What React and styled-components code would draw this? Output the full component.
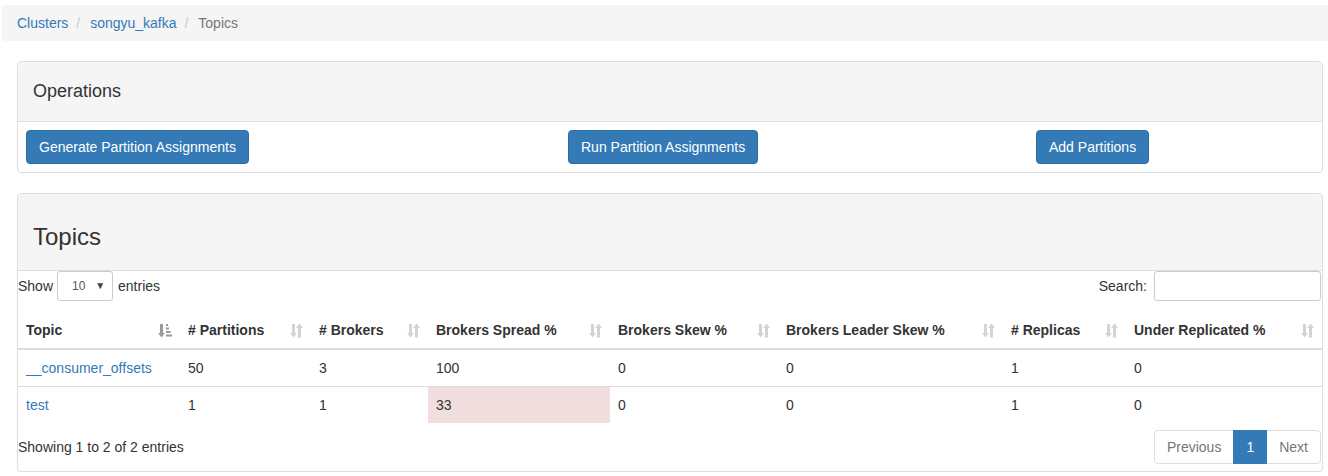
import React from "react";
import styled, { createGlobalStyle } from "styled-components";

const GlobalStyle = createGlobalStyle`
  body {
    margin: 0;
    overflow: hidden;
    background: #fff;
    font-family: "Liberation Sans", Arial, Helvetica, sans-serif;
    font-size: 14px;
    line-height: 20px;
    color: #333;
  }
  * { box-sizing: border-box; }
`;

const Page = styled.div`
  width: 1336px;
  margin-left: 2px;
  padding-top: 5px;
`;

const Breadcrumb = styled.ol`
  display: flex;
  list-style: none;
  margin: 0 0 20px;
  padding: 8px 15px;
  background: #f5f5f5;
  border-radius: 4px;

  li + li::before {
    content: "/\\00a0";
    color: #ccc;
    padding: 0 6px 0 8px;
  }
`;

const Crumb = styled.li`
  color: ${(p) => (p.$active ? "#777" : "#337ab7")};
`;

const Content = styled.div`
  padding: 0 15px;
`;

const Panel = styled.div`
  border: 1px solid #ddd;
  border-radius: 4px;
  margin-bottom: 20px;
  background: #fff;
  overflow: hidden;
`;

const PanelHeading = styled.div`
  background: #f5f5f5;
  border-bottom: 1px solid #ddd;
  padding: ${(p) => (p.$large ? "10px 15px" : "19px 15px 20px")};
`;

const PanelTitle = styled.h3`
  margin: ${(p) => (p.$large ? "20px 0 10px" : "0")};
  font-weight: 500;
  font-size: ${(p) => (p.$large ? "24px" : "18px")};
  line-height: ${(p) => (p.$large ? "26px" : "20px")};
  color: #333;
`;

const OpsBody = styled.div`
  display: grid;
  grid-template-columns: 542px 468px 1fr;
  padding: 8px;
`;

const Button = styled.button`
  justify-self: start;
  font-family: inherit;
  font-size: 14px;
  line-height: 20px;
  padding: 6px 12px;
  color: #fff;
  background: #337ab7;
  border: 1px solid #2e6da4;
  border-radius: 4px;
`;

const Controls = styled.div`
  display: flex;
  justify-content: space-between;
  align-items: center;
  padding: 0 1px 0 0;
`;

const Label = styled.label`
  display: flex;
  align-items: center;
  gap: 4px;
`;

const Select = styled.div`
  display: flex;
  align-items: center;
  justify-content: space-between;
  width: 56px;
  height: 30px;
  padding: 0 7px 0 14px;
  border: 1px solid #ccc;
  border-radius: 3px;
  font-size: 12px;
  color: #555;
  margin-right: 1px;
`;

const Caret = styled.span`
  font-size: 10px;
  color: #444;
`;

const SearchInput = styled.div`
  width: 167px;
  height: 30px;
  margin-left: 3px;
  border: 1px solid #ccc;
  border-radius: 3px;
`;

const Table = styled.table`
  width: 100%;
  table-layout: fixed;
  border-collapse: collapse;
  margin-top: 11px;
`;

const Th = styled.th`
  width: ${(p) => p.$w}px;
  text-align: left;
  padding: 8px;
  border-bottom: 2px solid #ddd;
  font-weight: bold;
`;

const ThInner = styled.div`
  display: flex;
  justify-content: space-between;
  align-items: center;
  white-space: nowrap;
`;

const Td = styled.td`
  padding: 8px;
  border-top: 1px solid #ddd;
  background: ${(p) => (p.$danger ? "#f2dede" : "transparent")};
  tr:first-child > & {
    border-top: none;
  }
`;

const Link = styled.span`
  color: #337ab7;
`;

const Footer = styled.div`
  display: flex;
  justify-content: space-between;
  align-items: center;
  padding: 7px 1px 7px 0;
`;

const Pagination = styled.div`
  display: flex;
`;

const PageItem = styled.span`
  display: block;
  padding: 6px 12px;
  line-height: 20px;
  border: 1px solid ${(p) => (p.$active ? "#337ab7" : "#ddd")};
  margin-left: -1px;
  color: ${(p) => (p.$active ? "#fff" : "#777")};
  background: ${(p) => (p.$active ? "#337ab7" : "#fff")};
  position: relative;
  z-index: ${(p) => (p.$active ? 1 : 0)};
  &:first-child {
    border-radius: 4px 0 0 4px;
    margin-left: 0;
  }
  &:last-child {
    border-radius: 0 4px 4px 0;
  }
`;

const SortBoth = () => (
  <svg width="13" height="15" viewBox="0 0 13 15" fill="#d4d4d4">
    <rect x="2" y="1" width="3" height="10" />
    <polygon points="0,10 7,10 3.5,14.5" />
    <polygon points="6,5 13,5 9.5,0.5" />
    <rect x="8" y="4" width="3" height="10.5" />
  </svg>
);

const SortAsc = () => (
  <svg width="14" height="15" viewBox="0 0 14 15" fill="#9a9a9a">
    <rect x="2" y="1" width="3" height="10" />
    <polygon points="0,10 7,10 3.5,14.5" />
    <rect x="8" y="1" width="2" height="2" />
    <rect x="8" y="4.5" width="3" height="2" />
    <rect x="8" y="8" width="4.5" height="2" />
    <rect x="8" y="11.5" width="6" height="2" />
  </svg>
);

const columns = [
  ["Topic", 162],
  ["# Partitions", 131],
  ["# Brokers", 117],
  ["Brokers Spread %", 182],
  ["Brokers Skew %", 168],
  ["Brokers Leader Skew %", 225],
  ["# Replicas", 123],
  ["Under Replicated %", 196],
];

const rows = [
  { topic: "__consumer_offsets", vals: ["50", "3", "100", "0", "0", "1", "0"] },
  { topic: "test", vals: ["1", "1", "33", "0", "0", "1", "0"], danger: 2 },
];

export default function App() {
  return (
    <Page>
      <GlobalStyle />
      <Breadcrumb>
        <Crumb>Clusters</Crumb>
        <Crumb>songyu_kafka</Crumb>
        <Crumb $active>Topics</Crumb>
      </Breadcrumb>
      <Content>
        <Panel>
          <PanelHeading>
            <PanelTitle>Operations</PanelTitle>
          </PanelHeading>
          <OpsBody>
            <Button>Generate Partition Assignments</Button>
            <Button>Run Partition Assignments</Button>
            <Button>Add Partitions</Button>
          </OpsBody>
        </Panel>
        <Panel>
          <PanelHeading $large>
            <PanelTitle $large>Topics</PanelTitle>
          </PanelHeading>
          <Controls>
            <Label>
              Show
              <Select>
                10<Caret>▼</Caret>
              </Select>
              entries
            </Label>
            <Label>
              Search:
              <SearchInput />
            </Label>
          </Controls>
          <Table>
            <thead>
              <tr>
                {columns.map(([name, w], i) => (
                  <Th key={name} $w={w}>
                    <ThInner>
                      {name}
                      {i === 0 ? <SortAsc /> : <SortBoth />}
                    </ThInner>
                  </Th>
                ))}
              </tr>
            </thead>
            <tbody>
              {rows.map((r) => (
                <tr key={r.topic}>
                  <Td>
                    <Link>{r.topic}</Link>
                  </Td>
                  {r.vals.map((v, i) => (
                    <Td key={i} $danger={r.danger === i}>
                      {v}
                    </Td>
                  ))}
                </tr>
              ))}
            </tbody>
          </Table>
          <Footer>
            <span>Showing 1 to 2 of 2 entries</span>
            <Pagination>
              <PageItem>Previous</PageItem>
              <PageItem $active>1</PageItem>
              <PageItem>Next</PageItem>
            </Pagination>
          </Footer>
        </Panel>
      </Content>
    </Page>
  );
}
